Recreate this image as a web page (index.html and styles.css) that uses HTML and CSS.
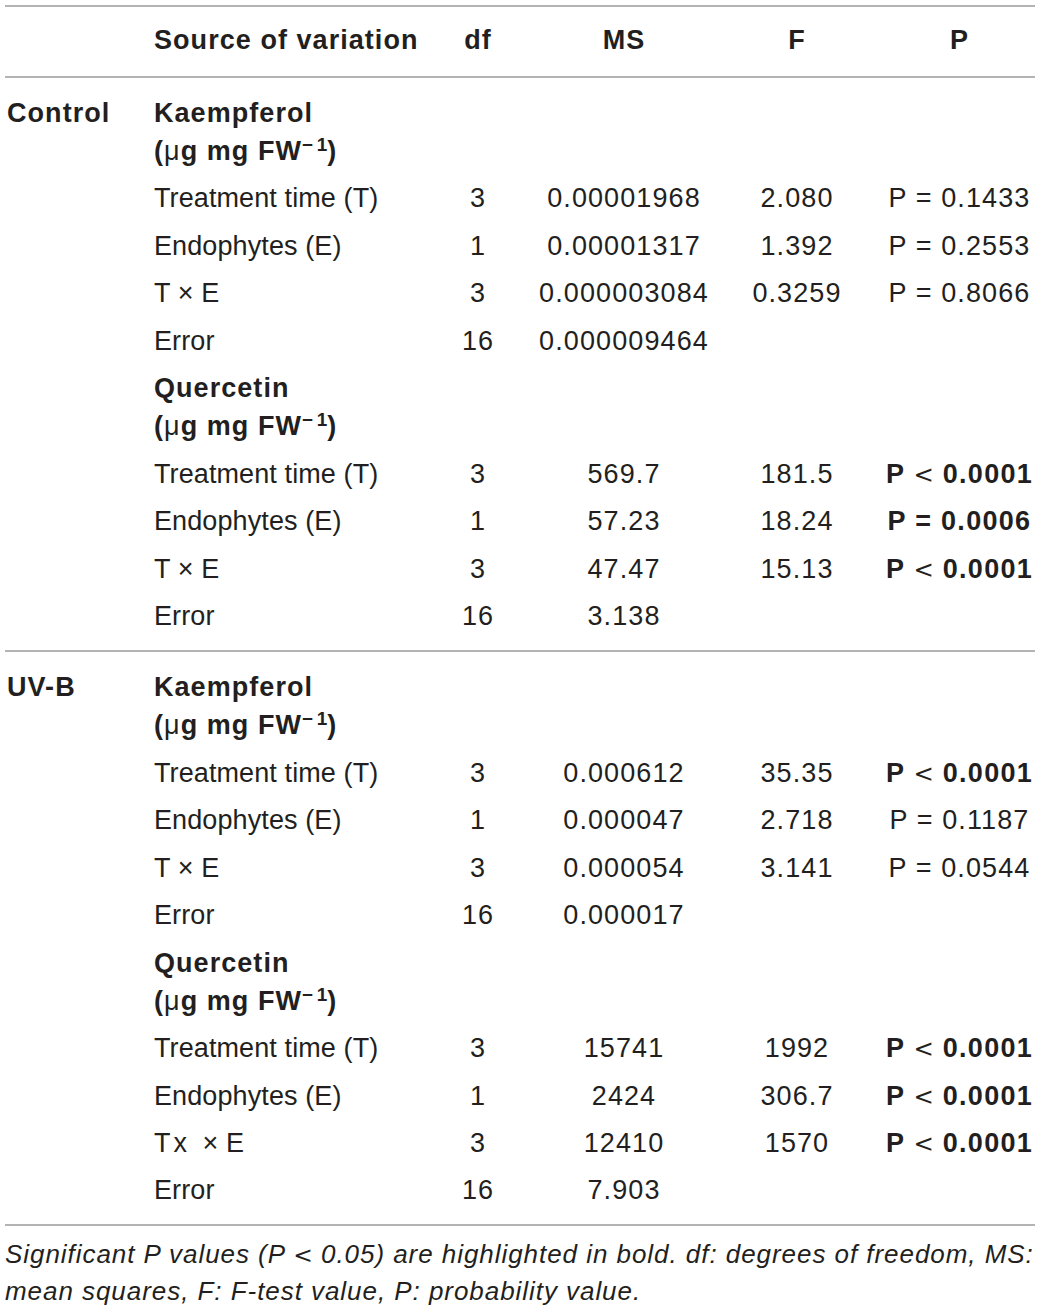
FILE: index.html
```html
<!DOCTYPE html>
<html lang="en">
<head>
<meta charset="utf-8">
<title>ANOVA table</title>
<link rel="stylesheet" href="styles.css">
</head>
<body>
<div class="wrap">
<table class="anova">
  <colgroup>
    <col class="c-group">
    <col class="c-src">
    <col class="c-df">
    <col class="c-ms">
    <col class="c-f">
    <col class="c-p">
  </colgroup>
  <thead>
    <tr>
      <th></th>
      <th class="src">Source of variation</th>
      <th>df</th>
      <th>MS</th>
      <th>F</th>
      <th class="pcol">P</th>
    </tr>
  </thead>
  <tbody>
    <tr class="first">
      <td class="group">Control</td>
      <td class="src var">Kaempferol<br>(<span class="mu">μ</span>g mg FW<sup>−&thinsp;1</sup>)</td>
      <td></td><td></td><td></td><td class="pcol"></td>
    </tr>
    <tr><td></td><td class="src">Treatment time (T)</td><td>3</td><td>0.00001968</td><td>2.080</td><td class="pcol">P = 0.1433</td></tr>
    <tr><td></td><td class="src">Endophytes (E)</td><td>1</td><td>0.00001317</td><td>1.392</td><td class="pcol">P = 0.2553</td></tr>
    <tr><td></td><td class="src">T × E</td><td>3</td><td>0.000003084</td><td>0.3259</td><td class="pcol">P = 0.8066</td></tr>
    <tr><td></td><td class="src">Error</td><td>16</td><td>0.000009464</td><td></td><td class="pcol"></td></tr>
    <tr>
      <td></td>
      <td class="src var">Quercetin<br>(<span class="mu">μ</span>g mg FW<sup>−&thinsp;1</sup>)</td>
      <td></td><td></td><td></td><td class="pcol"></td>
    </tr>
    <tr><td></td><td class="src">Treatment time (T)</td><td>3</td><td>569.7</td><td>181.5</td><td class="pcol sig">P <span class="op">&lt;</span> 0.0001</td></tr>
    <tr><td></td><td class="src">Endophytes (E)</td><td>1</td><td>57.23</td><td>18.24</td><td class="pcol sig">P = 0.0006</td></tr>
    <tr><td></td><td class="src">T × E</td><td>3</td><td>47.47</td><td>15.13</td><td class="pcol sig">P <span class="op">&lt;</span> 0.0001</td></tr>
    <tr class="last"><td></td><td class="src">Error</td><td>16</td><td>3.138</td><td></td><td class="pcol"></td></tr>
  </tbody>
  <tbody>
    <tr class="first">
      <td class="group">UV-B</td>
      <td class="src var">Kaempferol<br>(<span class="mu">μ</span>g mg FW<sup>−&thinsp;1</sup>)</td>
      <td></td><td></td><td></td><td class="pcol"></td>
    </tr>
    <tr><td></td><td class="src">Treatment time (T)</td><td>3</td><td>0.000612</td><td>35.35</td><td class="pcol sig">P <span class="op">&lt;</span> 0.0001</td></tr>
    <tr><td></td><td class="src">Endophytes (E)</td><td>1</td><td>0.000047</td><td>2.718</td><td class="pcol">P = 0.1187</td></tr>
    <tr><td></td><td class="src">T × E</td><td>3</td><td>0.000054</td><td>3.141</td><td class="pcol">P = 0.0544</td></tr>
    <tr><td></td><td class="src">Error</td><td>16</td><td>0.000017</td><td></td><td class="pcol"></td></tr>
    <tr>
      <td></td>
      <td class="src var">Quercetin<br>(<span class="mu">μ</span>g mg FW<sup>−&thinsp;1</sup>)</td>
      <td></td><td></td><td></td><td class="pcol"></td>
    </tr>
    <tr><td></td><td class="src">Treatment time (T)</td><td>3</td><td>15741</td><td>1992</td><td class="pcol sig">P <span class="op">&lt;</span> 0.0001</td></tr>
    <tr><td></td><td class="src">Endophytes (E)</td><td>1</td><td>2424</td><td>306.7</td><td class="pcol sig">P <span class="op">&lt;</span> 0.0001</td></tr>
    <tr><td></td><td class="src">T<span class="tx">x</span>&nbsp; × E</td><td>3</td><td>12410</td><td>1570</td><td class="pcol sig">P <span class="op">&lt;</span> 0.0001</td></tr>
    <tr class="last"><td></td><td class="src">Error</td><td>16</td><td>7.903</td><td></td><td class="pcol"></td></tr>
  </tbody>
</table>
<p class="note">Significant P values (P <span class="op">&lt;</span> 0.05) are highlighted in bold. df: degrees of freedom, MS:<br>mean squares, F: F-test value, P: probability value.</p>
</div>
</body>
</html>
```

FILE: styles.css
```css
html, body {
  margin: 0;
  padding: 0;
  background: #ffffff;
}

body {
  font-family: "Liberation Sans", Arial, Helvetica, sans-serif;
  color: #231f20;
  font-size: 26px;
}

.wrap {
  padding: 5px 0 0 5px;
  width: 1030px;
}

.anova {
  width: 1030px;
  border-collapse: collapse;
  table-layout: fixed;
  font-size: 27px;
}

.c-group { width: 149px; }
.c-src { width: 284px; }
.c-df { width: 80px; }
.c-ms { width: 212px; }
.c-f { width: 134px; }
.c-p { width: 171px; }

.anova th,
.anova td {
  line-height: 38px;
  padding: 4.74px 0;
  text-align: center;
  vertical-align: top;
  white-space: nowrap;
  font-weight: normal;
  letter-spacing: 1.1px;
}

.anova thead th {
  font-weight: bold;
  padding-top: 14px;
  padding-bottom: 17px;
  border-top: 2px solid #b3b3b3;
  border-bottom: 2px solid #b3b3b3;
}

.anova .src {
  text-align: left;
  letter-spacing: 0.1px;
}

.anova thead .src,
.anova .var,
.anova .group {
  letter-spacing: 1.05px;
}

.anova .pcol {
  padding-left: 20px;
}

.anova .group {
  text-align: left;
  padding-left: 2px;
  font-weight: bold;
}

.anova .var {
  font-weight: bold;
}

.anova tr.first td {
  padding-top: 16px;
}

.anova tr.last td {
  padding-bottom: 15px;
  border-bottom: 2px solid #b3b3b3;
}

.anova .sig {
  font-weight: bold;
  letter-spacing: 1.3px;
}

.op {
  font-family: "DejaVu Sans", sans-serif;
  font-weight: normal;
  font-size: 0.9em;
  line-height: 0;
  letter-spacing: 0;
}

.mu {
  font-weight: normal;
}

.tx {
  margin-left: 3px;
}

sup {
  font-size: 0.7em;
  line-height: 0;
  vertical-align: 0.5em;
  letter-spacing: 0;
}

.note {
  margin: 10px 0 0 0;
  font-style: italic;
  line-height: 37px;
  white-space: nowrap;
  letter-spacing: 0.95px;
}
```
